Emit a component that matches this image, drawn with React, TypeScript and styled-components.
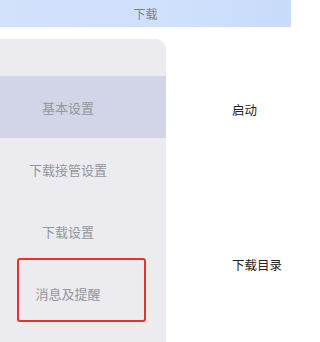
import React from "react";
import styled, { createGlobalStyle } from "styled-components";

const GlobalStyle = createGlobalStyle`
  html, body {
    margin: 0;
    padding: 0;
    background: #ffffff;
    font-family: "Noto Sans CJK SC", "Noto Sans", sans-serif;
  }
`;

const Page = styled.div`
  width: 291px;
  height: 342px;
  overflow: hidden;
  display: flex;
  flex-direction: column;
  background: #ffffff;
`;

const TitleBar = styled.div`
  height: 27px;
  flex-shrink: 0;
  display: flex;
  align-items: center;
  justify-content: center;
  background: linear-gradient(90deg, #d3e2fb 0%, #cfe0fb 60%, #c8dbfa 100%);
  color: #7d828c;
  font-size: 12px;
`;

const Body = styled.div`
  flex: 1;
  display: flex;
  padding-top: 12px;
`;

const Sidebar = styled.nav`
  position: relative;
  width: 166px;
  flex-shrink: 0;
  padding-top: 37px;
  background: #ebebf0;
  border-top-right-radius: 11px;
`;

const NavItem = styled.div<{ $active?: boolean }>`
  height: 62px;
  display: flex;
  align-items: center;
  justify-content: center;
  padding-right: 30px;
  font-size: 13px;
  color: #94969d;
  background: ${(p) => (p.$active ? "#d1d5e7" : "transparent")};
`;

const Highlight = styled.div`
  position: absolute;
  left: 17px;
  top: 219px;
  width: 129px;
  height: 64px;
  box-sizing: border-box;
  border: 2px solid #e8302c;
  border-radius: 3px;
`;

const Content = styled.div`
  flex: 1;
  padding-left: 66px;
  display: flex;
  flex-direction: column;
`;

const SettingLabel = styled.div<{ $top: number }>`
  margin-top: ${(p) => p.$top}px;
  height: 20px;
  line-height: 20px;
  font-size: 12.5px;
  color: #222222;
`;

const items = ["基本设置", "下载接管设置", "下载设置", "消息及提醒"];

export default function App() {
  return (
    <>
      <GlobalStyle />
      <Page>
        <TitleBar>下载</TitleBar>
        <Body>
          <Sidebar>
            {items.map((label, i) => (
              <NavItem key={label} $active={i === 0}>
                {label}
              </NavItem>
            ))}
            <Highlight />
          </Sidebar>
          <Content>
            <SettingLabel $top={61}>启动</SettingLabel>
            <SettingLabel $top={135}>下载目录</SettingLabel>
          </Content>
        </Body>
      </Page>
    </>
  );
}
